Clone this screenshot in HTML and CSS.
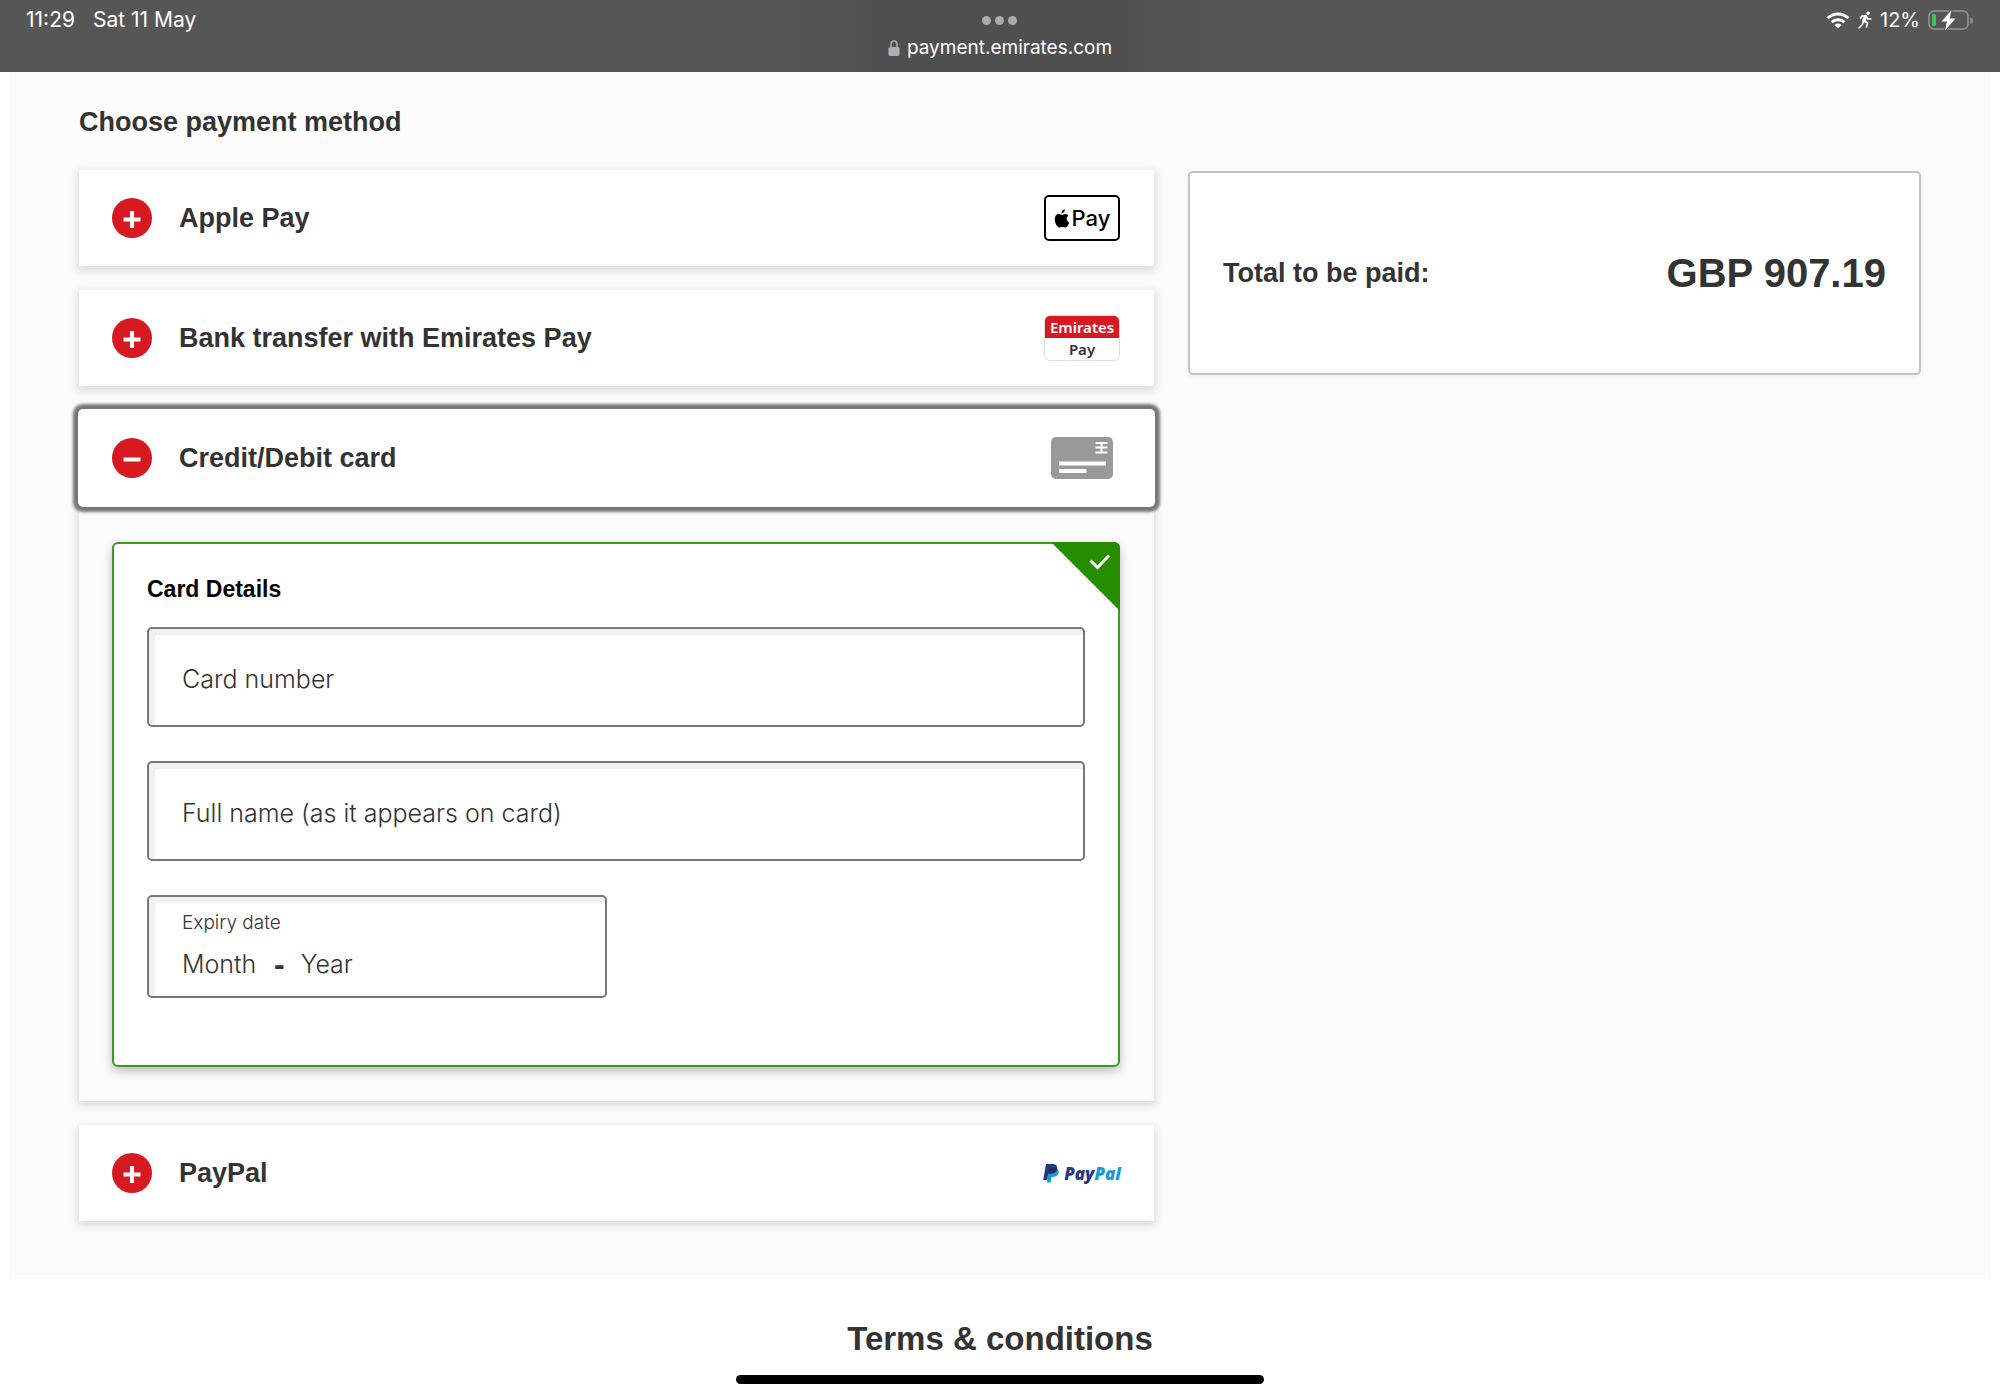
FILE: index.html
```html
<!DOCTYPE html>
<html lang="en">
<head>
  <meta charset="UTF-8" />
  <meta name="viewport" content="width=device-width, initial-scale=1" />
  <title>Choose payment method</title>
  <link rel="stylesheet" href="styles.css">
</head>
<body>

  <header class="status-bar">
    <div class="status-left">
      <span>11:29</span>
      <span>Sat 11 May</span>
    </div>
    <div class="status-center">
      <div class="dots"><i></i><i></i><i></i></div>
      <div class="address">
        <svg width="12" height="16" viewBox="0 0 12 16">
          <path d="M3 8V4.500a3 3.500 0 0 1 6 0V8" fill="none" stroke="#aeaeb4" stroke-width="1.500"/>
          <rect x="0.500" y="7" width="11" height="9" rx="1.500" fill="#aeaeb4"/>
        </svg>
        <span>payment.emirates.com</span>
      </div>
    </div>
    <div class="status-right">
      <svg width="24" height="18" viewBox="0 0 24 18" fill="none" stroke="#fff" stroke-width="3">
        <path d="M1.500 7.200a15 15 0 0 1 21 0"/>
        <path d="M5.500 11.300a9.300 9.300 0 0 1 13 0"/>
        <path d="M12 17.500L8.500 14a5 5 0 0 1 7 0z" fill="#fff" stroke="none"/>
      </svg>
      <svg width="14" height="18" viewBox="0 0 14 18" fill="none" stroke="#fff" stroke-width="1.600" stroke-linecap="round" stroke-linejoin="round">
        <circle cx="10.200" cy="2.200" r="1.700" fill="#fff" stroke="none"/>
        <path d="M2.500 7.500L4 4.800l3.800.2L10 8h3"/>
        <path d="M7.600 5.500L5.800 10" stroke-width="3.400"/>
        <path d="M6.500 10l3 2-1 4M5.300 11l-1 2.500L1 17"/>
      </svg>
      <span>12%</span>
      <svg width="46" height="22" viewBox="0 0 46 22">
        <rect x="1" y="2" width="39" height="18" rx="5" fill="none" stroke="#979797" stroke-width="1.500"/>
        <path d="M42.500 8v7q2.500-1 2.500-3.500t-2.500-3.500" fill="#979797"/>
        <rect x="4" y="5" width="4" height="12" rx="1.500" fill="#34c759"/>
        <path d="M23.500 1L13.500 12.500H19L17 21.500 27.500 9.500H21.500z" fill="#fff" stroke="#565656" stroke-width="2" paint-order="stroke"/>
      </svg>
    </div>
  </header>

  <main class="page">
    <h1>Choose payment method</h1>

    <div class="columns">
      <div class="methods">

        <button type="button" class="method" aria-expanded="false">
          <svg class="toggle" viewBox="0 0 40 40"><circle cx="20" cy="20" r="20"/><path d="M11.500 21.500h17M20 13v17"/></svg>
          <span class="method-name">Apple Pay</span>
          <span class="logo apple-pay">
            <svg width="16" height="19" viewBox="0 0 16 19">
              <path d="M10.800 0.300c.1 1.200-.3 2.200-1 3-.7.800-1.500 1.200-2.400 1.100 0-1.100.4-2.100 1-2.800.7-.8 1.600-1.200 2.400-1.300zM14.500 6.600c-2.600 1.700-2.300 5.700.8 6.900-.5 1.500-1.200 2.800-2.200 4-1.500 1.800-2.900.4-4.800.4s-3.200 1.300-4.600-.2C-.8 13 .2 5 4.700 5c1.400 0 2.300.8 3.300.8s2-.9 3.700-.8c1.100.1 2.100.6 2.800 1.600z"/>
            </svg>
            <span>Pay</span>
          </span>
        </button>

        <button type="button" class="method" aria-expanded="false">
          <svg class="toggle" viewBox="0 0 40 40"><circle cx="20" cy="20" r="20"/><path d="M11.500 21.500h17M20 13v17"/></svg>
          <span class="method-name">Bank transfer with Emirates Pay</span>
          <span class="logo emirates-pay">
            <span class="emirates-top">Emirates</span>
            <span class="emirates-bottom">Pay</span>
          </span>
        </button>

        <section class="method-open">
          <button type="button" class="method focused" aria-expanded="true">
            <svg class="toggle" viewBox="0 0 40 40"><circle cx="20" cy="20" r="20"/><path d="M11.500 21.500h17"/></svg>
            <span class="method-name">Credit/Debit card</span>
            <span class="logo card-logo">
              <svg width="62" height="42" viewBox="0 0 62 42">
                <rect width="62" height="42" rx="5" fill="#999"/>
                <path d="M8 26.500h47M8 34h27.500" stroke="#fff" stroke-width="4"/>
                <path d="M44.500 6h12M44.500 10.500h12M44.500 15.500h12M50.500 5v11" stroke="#fff" stroke-width="2"/>
              </svg>
            </span>
          </button>

          <div class="method-panel">
            <form class="card-form">
              <svg class="selected-corner" width="69" height="69" viewBox="0 0 69 69">
                <path d="M0 0h69v69z" fill="#278d00"/>
                <path d="M39.500 18.500l7 7 11.500-12" fill="none" stroke="#fff" stroke-width="3"/>
              </svg>
              <h2>Card Details</h2>

              <div class="field">
                <label for="card-number">Card number</label>
                <input type="text" id="card-number" inputmode="numeric">
              </div>

              <div class="field">
                <label for="full-name">Full name (as it appears on card)</label>
                <input type="text" id="full-name">
              </div>

              <fieldset class="expiry">
                <label for="expiry-month">Expiry date</label>
                <div class="expiry-row">
                  <input type="text" id="expiry-month" placeholder="Month">
                  <span>-</span>
                  <input type="text" id="expiry-year" placeholder="Year" aria-label="Year">
                </div>
              </fieldset>
            </form>
          </div>
        </section>

        <button type="button" class="method" aria-expanded="false">
          <svg class="toggle" viewBox="0 0 40 40"><circle cx="20" cy="20" r="20"/><path d="M11.500 21.500h17M20 13v17"/></svg>
          <span class="method-name">PayPal</span>
          <span class="logo paypal">
            <svg width="16" height="19" viewBox="0 0 16 19">
              <path d="M6 4h7.500q3 1.500 2 5t-5.500 4H8.500l-.9 5.500H4z" fill="#179bd7"/>
              <path d="M3 0h7q4.800.3 4 4.500-.8 5-6 5H5.300L4.300 16H.2z" fill="#253b80"/>
              <path d="M6.500 4H13.900q.2 5-5.900 5.500H5.500z" fill="#222d65"/>
            </svg>
            <span><b>Pay</b><em>Pal</em></span>
          </span>
        </button>
      </div>

      <aside class="total">
        <span class="total-label">Total to be paid:</span>
        <span class="total-amount">GBP 907.19</span>
      </aside>
    </div>
  </main>

  <footer class="terms">
    <h2>Terms &amp; conditions</h2>
  </footer>

  <div class="home-indicator"></div>

</body>
</html>
```
FILE: styles.css
```css
* {
  box-sizing: border-box;
}

body {
  margin: 0;
  min-height: 100vh;
  background: #fff;
  color: #333;
  font-family: "Liberation Sans", Arial, sans-serif;
}

h1, h2 {
  margin: 0;
  font-weight: 700;
}

button, input {
  font: inherit;
  color: inherit;
}

svg {
  display: block;
  flex: none;
}

/* status bar */
.status-bar {
  display: grid;
  grid-template-columns: 1fr auto 1fr;
  height: 72px;
  padding: 8px 26px 0;
  background: linear-gradient(90deg, #565656 38%, #4f4f4f 44%, #4f4f4f 56%, #565656 62%);
  color: #fff;
  font-family: Inter, sans-serif;
  font-size: 20px;
  line-height: 24px;
}

.status-left {
  display: flex;
  gap: 18px;
  font-size: 21px;
}

.status-center {
  display: flex;
  flex-direction: column;
  align-items: center;
}

.dots {
  display: flex;
  align-items: center;
  gap: 4px;
  height: 24px;
}

.dots i {
  width: 9px;
  height: 9px;
  border-radius: 50%;
  background: #ababab;
}

.address {
  display: flex;
  align-items: center;
  gap: 7px;
  height: 32px;
  font-size: 19px;
}

.status-right {
  display: flex;
  justify-content: flex-end;
  align-items: center;
  gap: 8px;
  height: 24px;
}

/* page */
.page {
  margin: 0 9px;
  padding: 32px 70px 58px;
  background: #fbfbfb;
}

h1 {
  font-size: 27px;
  line-height: 36px;
}

.columns {
  display: grid;
  grid-template-columns: 22fr 15fr;
  align-items: start;
  gap: 34px;
  margin-top: 30px;
}

.methods {
  display: flex;
  flex-direction: column;
  gap: 24px;
}

.method {
  display: flex;
  align-items: center;
  gap: 27px;
  width: 100%;
  height: 96px;
  padding: 0 34px 0 33px;
  border: none;
  background: #fff;
  box-shadow: 0 3px 8px 2px rgba(0, 0, 0, 0.12);
  font-size: 27px;
  font-weight: 700;
  text-align: left;
  cursor: pointer;
}

.method.focused {
  position: relative;
  z-index: 1;
  border-radius: 4px;
  box-shadow: 0 0 0 1px #fff, 0 0 3px 6px #777;
}

.toggle {
  width: 40px;
  height: 40px;
}

.toggle circle {
  fill: #d71921;
}

.toggle path {
  stroke: #fff;
  stroke-width: 4;
}

.method-name {
  flex: 1;
}

.logo {
  display: flex;
  justify-content: center;
  align-items: center;
  width: 76px;
  height: 46px;
}

.apple-pay {
  gap: 2px;
  border: 2px solid #000;
  border-radius: 5px;
  color: #000;
  font-family: Inter, sans-serif;
  font-size: 22px;
  font-weight: 500;
}

.emirates-pay {
  flex-direction: column;
  border: 1px solid #ddd;
  border-radius: 6px;
  overflow: hidden;
  font-family: "Noto Sans", sans-serif;
  font-size: 15px;
  line-height: 22px;
  font-weight: 600;
  text-align: center;
}

.emirates-top {
  width: 100%;
  background: #d71921;
  color: #fff;
}

.paypal {
  gap: 5px;
  color: #253b80;
  font-family: "Open Sans", sans-serif;
  font-size: 17px;
  font-style: italic;
  font-weight: 800;
}

.paypal b {
  font-weight: 800;
}

.paypal em {
  color: #179bd7;
}

.method-open {
  box-shadow: 0 3px 8px 2px rgba(0, 0, 0, 0.12);
}

.method-panel {
  padding: 36px 34px 34px 33px;
  background: #fbfbfb;
}

.card-form {
  position: relative;
  display: flex;
  flex-direction: column;
  gap: 34px;
  padding: 30px 33px 67px;
  border: 2px solid #3d9a1c;
  border-radius: 6px;
  background: #fff;
  box-shadow: 0 4px 10px rgba(0, 0, 0, 0.25);
}

.card-form h2 {
  margin-bottom: -11px;
  color: #000;
  font-size: 23px;
  line-height: 30px;
}

.selected-corner {
  position: absolute;
  top: -2px;
  right: -2px;
  border-top-right-radius: 6px;
}

.field {
  display: grid;
  align-items: center;
}

/* label sits on top of the empty input */
.field label,
.field input {
  grid-area: 1 / 1;
}

.field label {
  z-index: 1;
  padding: 4px 0 0 35px;
  pointer-events: none;
}

.field,
.expiry {
  font-family: Inter, "Liberation Sans", sans-serif;
  font-size: 25px;
  font-weight: 300;
}

.field input,
.expiry {
  border: 2px solid #777;
  border-radius: 5px;
  background: #fff;
  box-shadow: inset 6px 6px 0 #f1f1f1;
}

.field input {
  width: 100%;
  height: 100px;
  padding: 0 34px;
}

.expiry {
  width: 49%;
  margin: 0;
  padding: 12px 33px 13px;
}

.expiry label {
  display: block;
  font-size: 19px;
  line-height: 28px;
}

.expiry-row {
  display: flex;
  align-items: center;
  gap: 16px;
  margin-top: 8px;
}

.expiry-row span {
  font-family: "Liberation Sans", Arial, sans-serif;
  font-size: 32px;
  font-weight: 700;
  line-height: 38px;
}

.expiry input {
  width: 76px;
  height: 38px;
  padding: 0;
  border: none;
  background: none;
}

.expiry input::placeholder {
  color: #333;
  opacity: 1;
}

.total {
  display: flex;
  justify-content: space-between;
  align-items: center;
  min-height: 204px;
  margin-top: 1px;
  padding: 0 33px;
  border: 2px solid #c4c4c4;
  border-radius: 5px;
  background: #fff;
  box-shadow: 0 2px 4px rgba(0, 0, 0, 0.06);
  font-weight: 700;
}

.total-label {
  font-size: 27px;
}

.total-amount {
  font-size: 40px;
}

.terms {
  padding: 40px 0 36px;
  text-align: center;
}

.terms h2 {
  font-size: 33px;
  line-height: 40px;
}

.home-indicator {
  position: fixed;
  bottom: 13px;
  left: 50%;
  width: 528px;
  height: 9px;
  margin-left: -264px;
  border-radius: 5px;
  background: #000;
}
```
